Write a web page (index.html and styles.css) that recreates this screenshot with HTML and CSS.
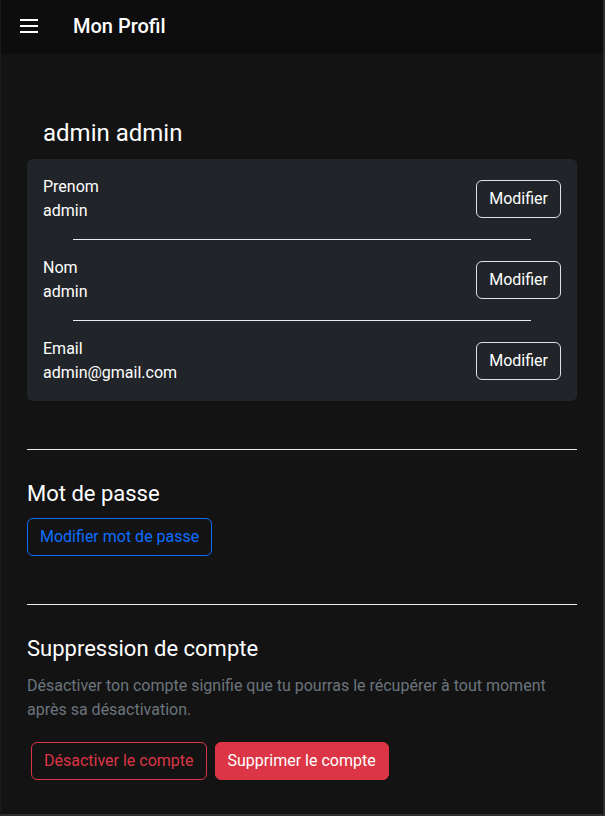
FILE: index.html
```html
<!DOCTYPE html>
<html lang="fr">
<head>
<meta charset="utf-8">
<title>Mon Profil</title>
<link rel="stylesheet" href="styles.css">
</head>
<body>
<div class="frame">
  <header class="topbar">
    <button class="menu" aria-label="Menu">
      <svg width="18" height="14" viewBox="0 0 18 14"><rect x="0" y="0" width="18" height="2" fill="#fff"/><rect x="0" y="6" width="18" height="2" fill="#fff"/><rect x="0" y="12" width="18" height="2" fill="#fff"/></svg>
    </button>
    <h1 class="title">Mon Profil</h1>
  </header>
  <main class="content">
    <h2 class="name">admin admin</h2>
    <section class="card">
      <div class="row">
        <div class="field"><div>Prenom</div><div>admin</div></div>
        <button class="btn btn-light">Modifier</button>
      </div>
      <div class="divider"></div>
      <div class="row">
        <div class="field"><div>Nom</div><div>admin</div></div>
        <button class="btn btn-light">Modifier</button>
      </div>
      <div class="divider"></div>
      <div class="row">
        <div class="field"><div>Email</div><div>admin@gmail.com</div></div>
        <button class="btn btn-light">Modifier</button>
      </div>
    </section>
    <hr class="rule">
    <h3 class="section-title">Mot de passe</h3>
    <button class="btn btn-blue">Modifier mot de passe</button>
    <hr class="rule">
    <h3 class="section-title">Suppression de compte</h3>
    <p class="muted">Désactiver ton compte signifie que tu pourras le récupérer à tout moment après sa désactivation.</p>
    <div class="actions">
      <button class="btn btn-red-outline">Désactiver le compte</button>
      <button class="btn btn-red">Supprimer le compte</button>
    </div>
  </main>
</div>
</body>
</html>
```

FILE: styles.css
```css
* { box-sizing: border-box; }
html, body { margin: 0; padding: 0; background: #131313; }
body {
  font-family: Roboto, "Liberation Sans", Arial, sans-serif;
  color: #fff;
  font-size: 16px;
  line-height: 1.5;
}
.frame {
  width: 605px;
  height: 816px;
  border-right: 2px solid #2e2e2e;
  border-bottom: 2px solid #2e2e2e;
  border-left: 1px solid #1c1c1c;
  background: #131313;
  overflow: hidden;
}
.topbar {
  height: 54px;
  background: #0d0d0d;
  display: flex;
  align-items: center;
  padding-left: 19px;
}
.menu {
  background: none;
  border: 0;
  padding: 0;
  width: 18px;
  height: 14px;
  display: flex;
  margin-top: -2px;
}
.title {
  margin: -2px 0 0 35px;
  font-size: 20px;
  font-weight: 500;
  line-height: 24px;
}
.content {
  padding: 0 26px 0 26px;
}
.name {
  margin: 65px 0 11px 16px;
  font-size: 24px;
  font-weight: 400;
  line-height: 29px;
}
.card {
  background: #212529;
  border-radius: 6px;
  padding: 16px 16px;
}
.row {
  display: flex;
  justify-content: space-between;
  align-items: center;
}
.field { line-height: 24px; font-size: 16px; }
.divider {
  height: 1px;
  background: #e9ecef;
  margin: 16px 30px;
}
.btn {
  font-family: inherit;
  font-size: 16px;
  line-height: 24px;
  padding: 6px 12px;
  border-radius: 6px;
  border: 1px solid;
  background: transparent;
  cursor: pointer;
}
.btn-light { color: #fff; border-color: #dee2e6; }
.btn-blue { color: #0d6efd; border-color: #0d6efd; }
.btn-red-outline { color: #dc3545; border-color: #dc3545; }
.btn-red { color: #fff; border-color: #dc3545; background: #dc3545; }
.rule {
  border: 0;
  height: 1px;
  background: #e9ecef;
  margin: 48px 0 31px;
}
.section-title {
  margin: 0 0 11px;
  font-size: 22px;
  font-weight: 400;
  line-height: 26px;
}
.muted {
  color: #6c757d;
  margin: 0 0 20px;
  font-size: 16px;
  line-height: 24px;
}
.section-title + .muted { margin-top: 12px; }
.actions {
  display: flex;
  gap: 8px;
  padding-left: 4px;
}
```
